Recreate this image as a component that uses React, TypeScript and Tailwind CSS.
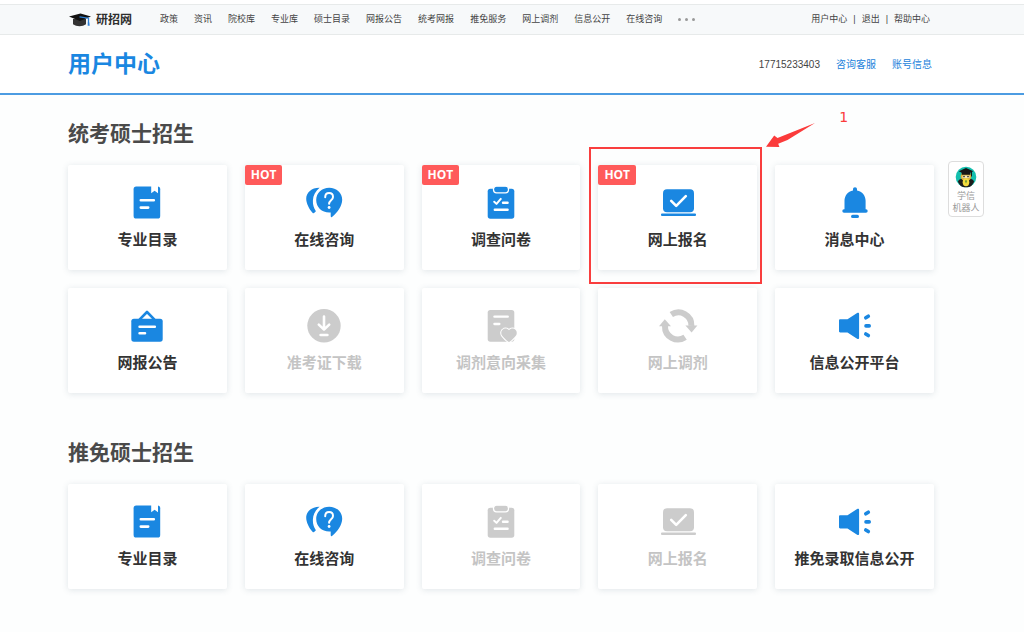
import React from 'react';
import clsx from 'clsx';

type Item = {
  label: string;
  icon: () => React.ReactElement;
  hot?: boolean;
  disabled?: boolean;
  marked?: boolean;
};

const navItems = [
  '政策',
  '资讯',
  '院校库',
  '专业库',
  '硕士目录',
  '网报公告',
  '统考网报',
  '推免服务',
  '网上调剂',
  '信息公开',
  '在线咨询',
];

/* Icons: filled shapes take the text colour, details are cut in white */
const Svg = ({ children }: { children: React.ReactNode }) => (
  <svg viewBox="0 0 36 36" className="size-9 overflow-visible" fill="currentColor" aria-hidden="true">
    {children}
  </svg>
);

const line = {
  fill: 'none',
  stroke: '#fff',
  strokeWidth: 2.6,
  strokeLinecap: 'round',
  strokeLinejoin: 'round',
} as const;

const BookIcon = () => (
  <Svg>
    <rect x="4.6" y="1.6" width="26.6" height="32" rx="2.6" />
    <path d="M22.2 1v7.2l3.4-2.4 3.400 2.400V1z" fill="#fff" />
    <path d="M11.8 15.3h13M11.8 22.6h7.4" {...line} />
  </Svg>
);

const ChatIcon = () => (
  <Svg>
    <path d="M13.6 2.7C6 2.5.2 7.2.2 13.8c0 4.5 3 10.4 6.3 13.9.6.7 1.3.7 1.9.1l1.5-1.6C7.8 23 6.7 19.5 6.9 15.5 7.1 10.3 9.5 6 13.6 2.7z" />
    <path d="M23.2 2.7c7.4 0 13 5.2 13 12 0 5.8-4.7 13-10.2 17.2-.7.5-1.3.2-1.3-.6v-3.9c-8.4.7-14.5-5-14.5-12.5 0-7 5.7-12.2 13-12.2z" />
    <path d="M19.2 12.3c0-2.6 1.6-4.2 3.9-4.2s3.9 1.6 3.9 3.8c0 3.3-3.9 3.4-3.9 6.9" {...line} strokeWidth="2" />
    <circle cx="23.1" cy="22.5" r="1.4" fill="#fff" />
  </Svg>
);

const SurveyIcon = () => (
  <Svg>
    <rect x="4.7" y="3.7" width="26.6" height="30" rx="2.6" />
    <rect x="10.5" y="1.2" width="15" height="6.6" rx="3" stroke="#fff" strokeWidth="1.3" />
    <path d="M11.2 16.7l2.3 2.2 4.3-5" {...line} strokeWidth="2" />
    <path d="M20 17.7h4.6M11.8 24.7h12.8" {...line} strokeWidth="2.4" />
  </Svg>
);

const LaptopIcon = () => (
  <Svg>
    <rect x="3" y="4.3" width="31" height="23" rx="4" />
    <rect x="1" y="28.6" width="35" height="2.4" rx="1" />
    <path d="M11.2 15.8l5 5 9.6-9.6" {...line} />
  </Svg>
);

const BellIcon = () => (
  <Svg>
    <path d="M18 2.2c1.2 0 2 .9 2 2v1.3c5.2 1 8.6 5.2 8.6 10.3v8.5h.4a1.7 1.7 0 0 1 0 3.4H7a1.7 1.7 0 0 1 0-3.4h.5v-8.5c0-5.1 3.4-9.3 8.5-10.3V4.2c0-1.1.8-2 2-2z" />
    <rect x="14" y="29.7" width="8" height="3.4" rx="1.7" />
  </Svg>
);

const NoticeIcon = () => (
  <Svg>
    <rect x="2.3" y="10.7" width="31.4" height="23" rx="2.6" />
    <path d="M10.5 11.7L18 4l7.5 7.7" fill="none" stroke="currentColor" strokeWidth="2.6" strokeLinejoin="round" />
    <path d="M10.6 18.7h15.2M10.6 25.2h5.4" {...line} />
  </Svg>
);

const DownloadIcon = () => (
  <Svg>
    <circle cx="18" cy="17.8" r="16.7" />
    <path d="M18 8.6v12.8M12.8 16.6l5.2 5 5.2-5M14.6 27h6.8" {...line} />
  </Svg>
);

const HeartIcon = () => (
  <Svg>
    <rect x="4.7" y="2" width="26.6" height="31.7" rx="2.6" />
    <path d="M11.4 8.7h13.4M11.4 16h5" {...line} strokeWidth="2.3" />
    <path
      d="M26 22.3c1.3-1.8 3.2-2.2 5-1.5 3 1.3 3.6 4.8 1.6 7.3-1.6 2.1-4 4.2-5.7 5.5-.6.5-1.2.5-1.8 0-1.7-1.3-4.1-3.4-5.7-5.5-2-2.5-1.4-6 1.6-7.3 1.8-.7 3.7-.3 5 1.5z"
      stroke="#fff"
      strokeWidth="2"
      paintOrder="stroke"
    />
  </Svg>
);

const RefreshIcon = () => (
  <Svg>
    <path d="M11.3 6.6A12.9 12.9 0 0 1 31.4 17.8" fill="none" stroke="currentColor" strokeWidth="6" />
    <path d="M25.4 17.6h12l-5.8 6.9z" />
    <path d="M25.1 29.2A12.9 12.9 0 0 1 5 18" fill="none" stroke="currentColor" strokeWidth="6" />
    <path d="M11 18.2H-1l5.800-6.900z" />
  </Svg>
);

const SpeakerIcon = () => (
  <Svg>
    <path d="M3.2 11.3h7.3l9.6-6.2c1.1-.7 2-.3 2 .9v23.800c0 1.200-.9 1.600-2 .9l-9.600-6.200H3.200c-.7 0-1.200-.5-1.200-1.200V12.500c0-.7.5-1.200 1.200-1.200z" />
    <path
      d="M28.8 9.8l2.5-1.6M29 17.9h3.2M28.8 26l2.5 1.6"
      fill="none"
      stroke="currentColor"
      strokeWidth="3.6"
      strokeLinecap="round"
    />
  </Svg>
);

const unified: Item[] = [
  { label: '专业目录', icon: BookIcon },
  { label: '在线咨询', icon: ChatIcon, hot: true },
  { label: '调查问卷', icon: SurveyIcon, hot: true },
  { label: '网上报名', icon: LaptopIcon, hot: true, marked: true },
  { label: '消息中心', icon: BellIcon },
  { label: '网报公告', icon: NoticeIcon },
  { label: '准考证下载', icon: DownloadIcon, disabled: true },
  { label: '调剂意向采集', icon: HeartIcon, disabled: true },
  { label: '网上调剂', icon: RefreshIcon, disabled: true },
  { label: '信息公开平台', icon: SpeakerIcon },
];

const exempted: Item[] = [
  { label: '专业目录', icon: BookIcon },
  { label: '在线咨询', icon: ChatIcon },
  { label: '调查问卷', icon: SurveyIcon, disabled: true },
  { label: '网上报名', icon: LaptopIcon, disabled: true },
  { label: '推免录取信息公开', icon: SpeakerIcon },
];

/* Red frame, arrow and step number around a card */
const Mark = () => (
  <>
    <span className="pointer-events-none absolute -top-[18px] -right-[5px] -bottom-[14px] -left-[9px] border-2 border-[#f93e3e]" />
    <svg
      viewBox="0 0 50 26"
      className="pointer-events-none absolute -top-[42px] left-full ml-[9px] h-[26px] w-[50px]"
      fill="#fb3b3b"
      aria-hidden="true"
    >
      <path d="M49 0L11.5 15 8.2 12.6 0 23.8l13.4.2-1.2-3.3L21.5 17z" />
    </svg>
    <span className="absolute -top-[58px] left-full ml-[82px] font-['DejaVu_Sans'] text-sm leading-5 text-[#fb3b3b]">
      1
    </span>
  </>
);

const Card = ({ label, icon: Icon, hot, disabled, marked }: Item) => (
  <a
    href="#"
    aria-disabled={disabled}
    className={clsx(
      'relative flex h-[105px] flex-col items-center rounded-xs bg-white pt-5 shadow-[0_1px_6px_rgba(60,90,110,0.15)]',
      disabled ? 'text-[#cccccc]' : 'text-[#1a87e1]'
    )}
  >
    {hot && (
      <span className="absolute top-0 left-0 rounded-xs bg-[#ff5a5a] px-[6px] font-['Open_Sans'] text-xs leading-5 font-bold text-white">
        HOT
      </span>
    )}
    <Icon />
    <span className={clsx('mt-[9px] text-[15px] leading-5 font-bold', disabled ? 'text-[#c4c4c4]' : 'text-[#333333]')}>
      {label}
    </span>
    {marked && <Mark />}
  </a>
);

const Section = ({ title, items }: { title: string; items: Item[] }) => (
  <section>
    <h2 className="mb-[17px] text-[21px] leading-7 font-bold text-[#4a4a4a]">{title}</h2>
    <div className="grid grid-cols-5 gap-[18px]">
      {items.map((item) => (
        <Card key={item.label} {...item} />
      ))}
    </div>
  </section>
);

const Robot = () => (
  <a
    href="#"
    className="absolute top-[41px] left-full ml-[14px] flex h-14 w-9 flex-col items-center rounded-sm border border-[#dddddd] bg-white pt-1 text-[9px] leading-3 whitespace-nowrap text-[#999999]"
  >
    <svg viewBox="0 0 22 22" className="mb-[2px] size-[22px] shrink-0" aria-hidden="true">
      <circle cx="11" cy="11" r="10.3" fill="#14bfae" />
      <path d="M3 16c0-2 3-4 8-4s8 2 8 4l-2.500 3.800c-3 2-8 2-11 0z" fill="#1c1c1c" />
      <ellipse cx="11" cy="10.5" rx="5.4" ry="4.6" fill="#d9b13c" />
      <ellipse cx="11" cy="16.3" rx="3.3" ry="4" fill="#f3dc3e" />
      <path d="M7.5 9.5h7v2.6h-7z" fill="#f3e6b8" />
      <circle cx="9" cy="10.6" r="0.8" fill="#222" />
      <circle cx="13" cy="10.6" r="0.8" fill="#222" />
      <path d="M3.800 5.200L11 2l7.300 3.200-3 1.600v2H6.700v-2z" fill="#161616" />
      <path d="M16.500 6v4.500" stroke="#161616" strokeWidth="1" />
      <path d="M10 14.500l1 3 1-3z" fill="#37863a" />
    </svg>
    <span>学信</span>
    <span>机器人</span>
  </a>
);

const Logo = () => (
  <a href="#" className="flex items-center gap-1 text-xs font-bold text-[#2e2e2e]">
    <svg viewBox="0 0 24 14" className="h-[14px] w-6" aria-hidden="true">
      <path d="M5 6v5.2c3.5 2.6 9.5 2.6 13 0V6z" fill="#333" />
      <path d="M1 3.6L12.5.6 23 3.4 11.8 8z" fill="#111" />
      <path d="M11.5 3.8l9 1.4v5" fill="none" stroke="#2c80d8" strokeWidth="1.3" />
      <path d="M19.8 9.5h1.5l.4 3.3h-2z" fill="#2c80d8" />
    </svg>
    研招网
  </a>
);

const App = () => {
  return (
    <div
      lang="zh-CN"
      className="min-h-screen bg-[#fdfefe] pb-11 font-['Liberation_Sans','Noto_Sans_CJK_SC',sans-serif] text-[#444444]"
    >
      {/* Top navigation */}
      <div className="bg-white pt-1">
        <div className="border-y border-[#e7eaea] bg-[#f7f9fa] pr-[22px]">
          <div className="mx-auto flex h-[29px] max-w-[866px] items-center text-[9px] whitespace-nowrap">
            <Logo />
            <nav className="ml-7 flex items-center gap-4">
              {navItems.map((item) => (
                <a key={item} href="#">
                  {item}
                </a>
              ))}
              <button type="button" aria-label="更多" className="flex gap-1">
                <span className="size-[3px] rounded-full bg-[#999999]" />
                <span className="size-[3px] rounded-full bg-[#999999]" />
                <span className="size-[3px] rounded-full bg-[#999999]" />
              </button>
            </nav>
            <div className="mr-1 ml-auto flex items-center gap-[6px]">
              <a href="#">用户中心</a>
              <span>|</span>
              <a href="#">退出</a>
              <span>|</span>
              <a href="#">帮助中心</a>
            </div>
          </div>
        </div>
      </div>

      {/* Page title */}
      <header className="border-b-2 border-[#4c9ce2] bg-white pr-[22px]">
        <div className="mx-auto flex h-[58px] max-w-[866px] items-center">
          <h1 className="text-[23px] leading-8 font-bold text-[#1a87e1]">用户中心</h1>
          <div className="mr-[2px] ml-auto flex items-center gap-4 text-[10px] text-[#1a7fdb]">
            <span className="text-[#444444]">17715233403</span>
            <a href="#">咨询客服</a>
            <a href="#">账号信息</a>
          </div>
        </div>
      </header>

      <main className="pt-[25px] pr-[22px]">
        <div className="relative mx-auto flex max-w-[866px] flex-col gap-[46px]">
          <Section title="统考硕士招生" items={unified} />
          <Section title="推免硕士招生" items={exempted} />
          <Robot />
        </div>
      </main>
    </div>
  );
};

export default App;
